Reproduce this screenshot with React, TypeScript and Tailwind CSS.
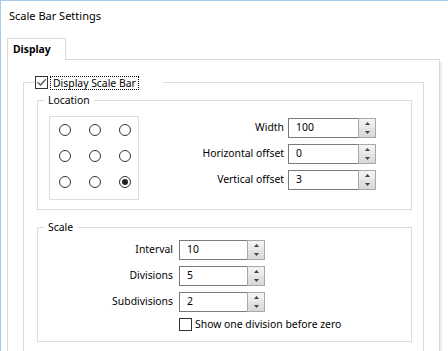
import React from 'react';

const CheckBox = ({ checked }: { checked?: boolean }) => (
  <span className="flex h-[13px] w-[13px] shrink-0 items-center justify-center border border-[#333333] bg-white">
    {checked && (
      <svg width="11" height="11" viewBox="0 0 11 11">
        <path d="M1.5 5.2 L4.5 8 L9.8 2.2" fill="none" stroke="#555555" strokeWidth="1.3" />
      </svg>
    )}
  </span>
);

const Radio = ({ checked }: { checked?: boolean }) => (
  <span className="flex h-[12px] w-[12px] items-center justify-center rounded-full border border-[#333333] bg-white">
    {checked && <span className="h-[6px] w-[6px] rounded-full bg-[#222222]" />}
  </span>
);

const Spinner = ({ value, width }: { value: string; width: string }) => (
  <div className={`flex h-[20px] ${width}`}>
    <div className="flex flex-1 items-center border-y border-l border-[#7a7a7a] bg-white pl-[7px]">{value}</div>
    <div className="flex w-[18px] flex-col border border-[#a8a8a8]">
      <div className="flex flex-1 items-center justify-center bg-gradient-to-b from-[#f4f4f4] to-[#e8e8e8]">
        <svg width="5" height="3" viewBox="0 0 5 3">
          <path d="M2.5 0 L5 3 L0 3 Z" fill="#404040" />
        </svg>
      </div>
      <div className="flex flex-1 items-center justify-center bg-gradient-to-b from-[#e4e4e4] to-[#d8d8d8]">
        <svg width="5" height="3" viewBox="0 0 5 3">
          <path d="M0 0 L5 0 L2.5 3 Z" fill="#404040" />
        </svg>
      </div>
    </div>
  </div>
);

const App = () => {
  return (
    <div className="flex h-[351px] w-[448px] flex-col overflow-hidden bg-white font-['Noto_Sans',sans-serif] text-[10.4px] text-black shadow-[inset_1px_1px_0_#a9cbea]">
      {/* Title */}
      <div className="h-[38px] shrink-0 pl-[9px] pt-[8px] text-[11px] leading-[16px]">Scale Bar Settings</div>

      {/* Tabs */}
      <div className="ml-[7px] flex w-[433px] shrink-0">
        <div className="flex h-[22px] w-[59px] items-center border-x border-t border-[#d9d9d9] pl-[5px] font-bold">
          Display
        </div>
        <div className="h-[22px] flex-1 border-b border-[#d9d9d9]" />
      </div>

      {/* Tab page */}
      <div className="ml-[7px] w-[433px] shrink-0 border-x border-[#d9d9d9] shadow-[2px_2px_0_0_#eeeeee]">
        <fieldset className="mx-[15px] mt-[15px] border border-[#dcdcdc] pb-[30px]">
          <legend className="ml-[11px] w-[128px]">
            <div className="flex h-[15px] items-center">
              <CheckBox checked />
              <span className="ml-[2px] border border-dotted border-black px-[2px] leading-[12px]">Display Scale Bar</span>
            </div>
          </legend>

          {/* Location */}
          <fieldset className="ml-[13px] mr-[11px] mt-[3px] border border-[#dcdcdc]">
            <legend className="ml-[6px] px-[4px] leading-[15px]">Location</legend>
            <div className="flex items-start justify-between pb-[9px] pl-[11px] pr-[35px] pt-[8px]">
              <div className="flex h-[84px] w-[90px] flex-col gap-[14px] border border-[#dcdcdc] pl-[9px] pt-[7px]">
                <div className="flex gap-[18px]">
                  <Radio />
                  <Radio />
                  <Radio />
                </div>
                <div className="flex gap-[18px]">
                  <Radio />
                  <Radio />
                  <Radio />
                </div>
                <div className="flex gap-[18px]">
                  <Radio />
                  <Radio />
                  <Radio checked />
                </div>
              </div>
              <div className="mt-[2px] flex flex-col gap-[6px]">
                <div className="flex items-center justify-end gap-[4px]">
                  <span>Width</span>
                  <Spinner value="100" width="w-[88px]" />
                </div>
                <div className="flex items-center justify-end gap-[4px]">
                  <span>Horizontal offset</span>
                  <Spinner value="0" width="w-[88px]" />
                </div>
                <div className="flex items-center justify-end gap-[4px]">
                  <span>Vertical offset</span>
                  <Spinner value="3" width="w-[88px]" />
                </div>
              </div>
            </div>
          </fieldset>

          {/* Scale */}
          <fieldset className="ml-[13px] mr-[11px] mt-[10px] border border-[#dcdcdc]">
            <legend className="ml-[6px] px-[4px] leading-[15px]">Scale</legend>
            <div className="grid grid-cols-[135px_86px] items-center gap-x-[6px] gap-y-[6px] pb-[10px] pt-[5px]">
              <span className="text-right">Interval</span>
              <Spinner value="10" width="w-[86px]" />
              <span className="text-right">Divisions</span>
              <Spinner value="5" width="w-[86px]" />
              <span className="text-right">Subdivisions</span>
              <Spinner value="2" width="w-[86px]" />
              <div className="col-start-2 flex items-center whitespace-nowrap">
                <CheckBox />
                <span className="ml-[3px] leading-[13px]">Show one division before zero</span>
              </div>
            </div>
          </fieldset>
        </fieldset>
      </div>
    </div>
  );
};

export default App;
